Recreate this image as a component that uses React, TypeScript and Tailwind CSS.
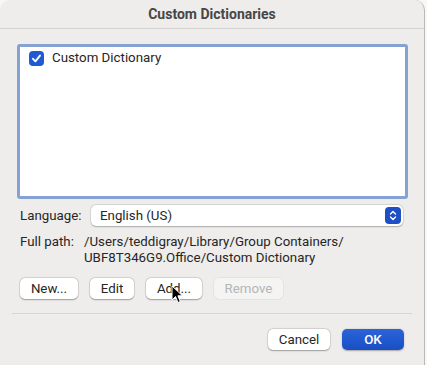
import React from "react";

const font = { fontFamily: "Roboto, 'Noto Sans', sans-serif" };

function Btn({ children, w, disabled }: { children: React.ReactNode; w: string; disabled?: boolean }) {
  return (
    <div
      className={`${w} h-[21px] rounded-[5px] flex items-center justify-center text-[13.3px] ${
        disabled
          ? "bg-[#f4f4f3] text-[#b5b5b5] shadow-[0_0_0_0.5px_rgba(0,0,0,0.08)]"
          : "bg-white text-[#262626] shadow-[0_0.5px_1.5px_rgba(0,0,0,0.3),0_0_0_0.5px_rgba(0,0,0,0.12)]"
      }`}
    >
      {children}
    </div>
  );
}

export default function App() {
  return (
    <div className="w-[427px] h-[365px] bg-[#f7f7f7] overflow-hidden relative" style={font}>
      <div className="w-[425px] h-[365px] bg-[#eeedec] rounded-t-[10px] border-r border-[#b9b9b9] flex flex-col">
        <div className="h-[29px] shrink-0 border-b border-[#d3d3d3] flex items-center justify-center text-[14px] font-bold text-[#464646] pt-[1px]">
          Custom Dictionaries
        </div>
        <div className="pl-[17px] pr-[17px] pt-[15px]">
          <div className="w-[391px] h-[155px] border-[3px] border-[#86a1d4] rounded-[3px] bg-white px-[9px] pt-[1px]">
            <div className="flex items-center gap-[8px] h-[20px]">
              <div className="w-[15px] h-[15px] rounded-[4px] bg-[#1f5ad3] flex items-center justify-center">
                <svg width="11" height="11" viewBox="0 0 11 11">
                  <path d="M2 5.8 L4.4 8.3 L9 2.6" fill="none" stroke="white" strokeWidth="1.9" strokeLinecap="round" strokeLinejoin="round" />
                </svg>
              </div>
              <span className="text-[13.3px] text-[#262626]">Custom Dictionary</span>
            </div>
          </div>
        </div>
        <div className="flex items-center pl-[20px] pr-[21px] mt-[6px]">
          <span className="text-[13.3px] text-[#262626] w-[71px]">Language:</span>
          <div className="flex-1 h-[21px] bg-white rounded-[5px] shadow-[0_0.5px_1.5px_rgba(0,0,0,0.25),0_0_0_0.5px_rgba(0,0,0,0.1)] flex items-center justify-between pl-[9px] pr-[2px]">
            <span className="text-[13.3px] text-[#262626]">English (US)</span>
            <div className="w-[16px] h-[17px] rounded-[4px] bg-[#1f4fc6] flex items-center justify-center">
              <svg width="10" height="13" viewBox="0 0 10 13">
                <path d="M2.5 5 L5 2.5 L7.5 5 M2.5 8 L5 10.5 L7.5 8" fill="none" stroke="white" strokeWidth="1.4" strokeLinecap="round" strokeLinejoin="round" />
              </svg>
            </div>
          </div>
        </div>
        <div className="flex pl-[20px] mt-[8px] text-[13.3px] text-[#262626] leading-[16px]">
          <span className="w-[64px]">Full path:</span>
          <div>
            <div>/Users/teddigray/Library/Group Containers/</div>
            <div>UBF8T346G9.Office/Custom Dictionary</div>
          </div>
        </div>
        <div className="flex pl-[20px] gap-[12px] mt-[12px]">
          <Btn w="w-[58px]">New...</Btn>
          <Btn w="w-[44px]">Edit</Btn>
          <Btn w="w-[56px]">Add...</Btn>
          <Btn w="w-[69px]" disabled>Remove</Btn>
        </div>
        <div className="mx-[12px] mt-[14px] h-px bg-[#d6d6d6]" />
        <div className="flex justify-end gap-[12px] pr-[20px] mt-[15px]">
          <Btn w="w-[62px]">Cancel</Btn>
          <div className="w-[62px] h-[21px] rounded-[5px] bg-gradient-to-b from-[#2b63d9] to-[#1a4fc4] shadow-[0_0.5px_1.5px_rgba(0,0,0,0.3)] flex items-center justify-center text-[13.3px] text-white font-medium">
            OK
          </div>
        </div>
      </div>
      <svg className="absolute left-[171px] top-[285px]" width="14" height="20" viewBox="0 0 14 20">
        <path d="M1 1 L1 15 L4.5 11.5 L7 17.5 L9.3 16.5 L6.9 10.8 L11.5 10.8 Z" fill="black" stroke="white" strokeWidth="1" strokeLinejoin="round" />
      </svg>
    </div>
  );
}
